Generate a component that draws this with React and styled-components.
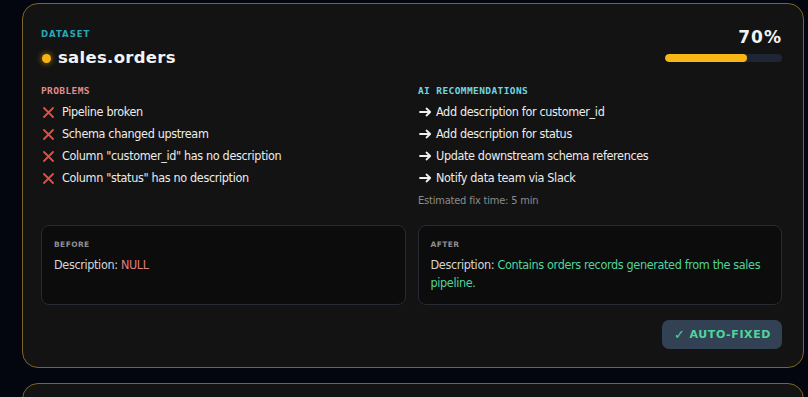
import React from "react";
import styled, { createGlobalStyle } from "styled-components";

const Global = createGlobalStyle`
  html, body { margin: 0; padding: 0; background: #03060f; }
  body { font-family: "DejaVu Sans Condensed", "Liberation Sans", sans-serif; color: #e6e6e6; }
`;

const Page = styled.div`
  display: flex;
  flex-direction: column;
  gap: 15px;
  padding: 3px 4px 0 22px;
  height: 397px;
  box-sizing: border-box;
  overflow: hidden;
`;

const Card = styled.section`
  flex-shrink: 0;
  background: #131313;
  border: 1px solid #7d6428;
  border-radius: 16px;
  padding: 20px 21px 18px 18px;
  display: flex;
  flex-direction: column;
  box-sizing: border-box;
  min-height: ${(p) => p.$minH || 0}px;
`;

const Header = styled.div`
  display: flex;
  justify-content: space-between;
  align-items: flex-start;
`;

const TitleBlock = styled.div`
  display: flex;
  flex-direction: column;
  gap: 8px;
  padding-top: 5px;
`;

const Eyebrow = styled.div`
  font-family: "DejaVu Sans", sans-serif;
  font-size: 8.5px;
  font-weight: 700;
  letter-spacing: 1px;
  color: ${(p) => p.$color};
  line-height: 11px;
`;

const TitleRow = styled.div`
  display: flex;
  align-items: center;
  gap: 7px;
`;

const Dot = styled.span`
  width: 9px;
  height: 9px;
  border-radius: 50%;
  background: #f5b414;
  box-shadow: 0 0 6px rgba(245, 180, 20, 0.7);
  margin-left: 1px;
`;

const Title = styled.h1`
  margin: 0;
  font-family: "DejaVu Sans", sans-serif;
  font-size: 16.5px;
  font-weight: 700;
  letter-spacing: 0.3px;
  color: #f2f2f2;
  line-height: 20px;
`;

const Score = styled.div`
  display: flex;
  flex-direction: column;
  align-items: flex-end;
  gap: 6px;
  padding-top: 2px;
`;

const Percent = styled.div`
  font-family: "DejaVu Sans", sans-serif;
  font-size: 17px;
  font-weight: 700;
  letter-spacing: 1px;
  color: #f2f2f2;
  line-height: 22px;
`;

const Track = styled.div`
  width: 117px;
  height: 8px;
  border-radius: 4px;
  background: #1f2633;
  overflow: hidden;
`;

const Fill = styled.div`
  height: 100%;
  border-radius: 4px;
  background: #f7b516;
`;

const Columns = styled.div`
  display: grid;
  grid-template-columns: 1fr 1fr;
  column-gap: 13px;
  margin-top: 17px;
`;

const Column = styled.div`
  display: flex;
  flex-direction: column;
`;

const SectionLabel = styled.div`
  font-family: "DejaVu Sans Mono", monospace;
  font-size: 9.5px;
  font-weight: 700;
  letter-spacing: 0.4px;
  color: ${(p) => p.$color};
  line-height: 12px;
  margin-bottom: 6px;
`;

const List = styled.ul`
  list-style: none;
  margin: 0;
  padding: 0;
  display: flex;
  flex-direction: column;
  gap: 4px;
`;

const Item = styled.li`
  display: flex;
  align-items: center;
  gap: ${(p) => (p.$arrow ? 4 : 8)}px;
  font-size: 12.5px;
  letter-spacing: -0.35px;
  line-height: 18px;
  color: #ececec;
  padding-left: ${(p) => (p.$arrow ? 1 : 2)}px;
`;

const Note = styled.div`
  font-size: 11px;
  letter-spacing: -0.2px;
  color: #8c8c8c;
  margin-top: 7px;
  line-height: 14px;
`;

const Compare = styled.div`
  display: grid;
  grid-template-columns: 1fr 1fr;
  column-gap: 12px;
  margin-top: 17px;
`;

const Box = styled.div`
  background: #0c0c0d;
  border: 1px solid #272b33;
  border-radius: 8px;
  padding: 13px 12px 12px;
  min-height: 79px;
  box-sizing: border-box;
`;

const BoxLabel = styled.div`
  font-family: "DejaVu Sans", sans-serif;
  font-size: 7.5px;
  font-weight: 700;
  letter-spacing: 0.4px;
  color: #8f8f8f;
  line-height: 11px;
  margin-bottom: 6px;
`;

const Desc = styled.div`
  font-size: 12.5px;
  letter-spacing: -0.35px;
  line-height: 18px;
  color: #d6d6d6;
`;

const Value = styled.span`
  color: ${(p) => p.$color};
`;

const Footer = styled.div`
  display: flex;
  justify-content: flex-end;
  margin-top: 15px;
`;

const Badge = styled.div`
  background: #334155;
  border-radius: 7px;
  padding: 0 11px 0 12px;
  height: 29px;
  display: flex;
  align-items: center;
  gap: 4px;
  font-family: "DejaVu Sans", sans-serif;
  font-size: 11px;
  font-weight: 700;
  letter-spacing: 0.6px;
  color: #4fd69c;
`;

const Check = styled.span`
  font-size: 13px;
  line-height: 1;
`;

const Cross = () => (
  <svg width="11" height="11" viewBox="0 0 11 11" fill="none">
    <path d="M1 1L10 10M10 1L1 10" stroke="#ef4b3c" strokeWidth="1.8" strokeLinecap="round" />
  </svg>
);

const Arrow = () => (
  <svg width="13" height="10" viewBox="0 0 13 10" fill="none">
    <path d="M1 5H11M7.5 1.5L11.2 5L7.5 8.5" stroke="#f0f0f0" strokeWidth="1.8" strokeLinecap="round" strokeLinejoin="round" />
  </svg>
);

const problems = [
  "Pipeline broken",
  "Schema changed upstream",
  'Column "customer_id" has no description',
  'Column "status" has no description',
];

const recs = [
  "Add description for customer_id",
  "Add description for status",
  "Update downstream schema references",
  "Notify data team via Slack",
];

export default function App() {
  const pct = 70;
  return (
    <>
      <Global />
      <Page>
        <Card>
          <Header>
            <TitleBlock>
              <Eyebrow $color="#27a9bb">DATASET</Eyebrow>
              <TitleRow>
                <Dot />
                <Title>sales.orders</Title>
              </TitleRow>
            </TitleBlock>
            <Score>
              <Percent>{pct}%</Percent>
              <Track>
                <Fill style={{ width: `${pct}%` }} />
              </Track>
            </Score>
          </Header>

          <Columns>
            <Column>
              <SectionLabel $color="#e48a8a">PROBLEMS</SectionLabel>
              <List>
                {problems.map((p) => (
                  <Item key={p}>
                    <Cross />
                    {p}
                  </Item>
                ))}
              </List>
            </Column>
            <Column>
              <SectionLabel $color="#6fd6e2">AI RECOMMENDATIONS</SectionLabel>
              <List>
                {recs.map((r) => (
                  <Item key={r} $arrow>
                    <Arrow />
                    {r}
                  </Item>
                ))}
              </List>
              <Note>Estimated fix time: 5 min</Note>
            </Column>
          </Columns>

          <Compare>
            <Box>
              <BoxLabel>BEFORE</BoxLabel>
              <Desc>
                Description: <Value $color="#e07f7f">NULL</Value>
              </Desc>
            </Box>
            <Box>
              <BoxLabel>AFTER</BoxLabel>
              <Desc>
                Description:{" "}
                <Value $color="#52d39b">Contains orders records generated from the sales pipeline.</Value>
              </Desc>
            </Box>
          </Compare>

          <Footer>
            <Badge>
              <Check>✓</Check>
              AUTO-FIXED
            </Badge>
          </Footer>
        </Card>
        <Card $minH={120} />
      </Page>
    </>
  );
}
